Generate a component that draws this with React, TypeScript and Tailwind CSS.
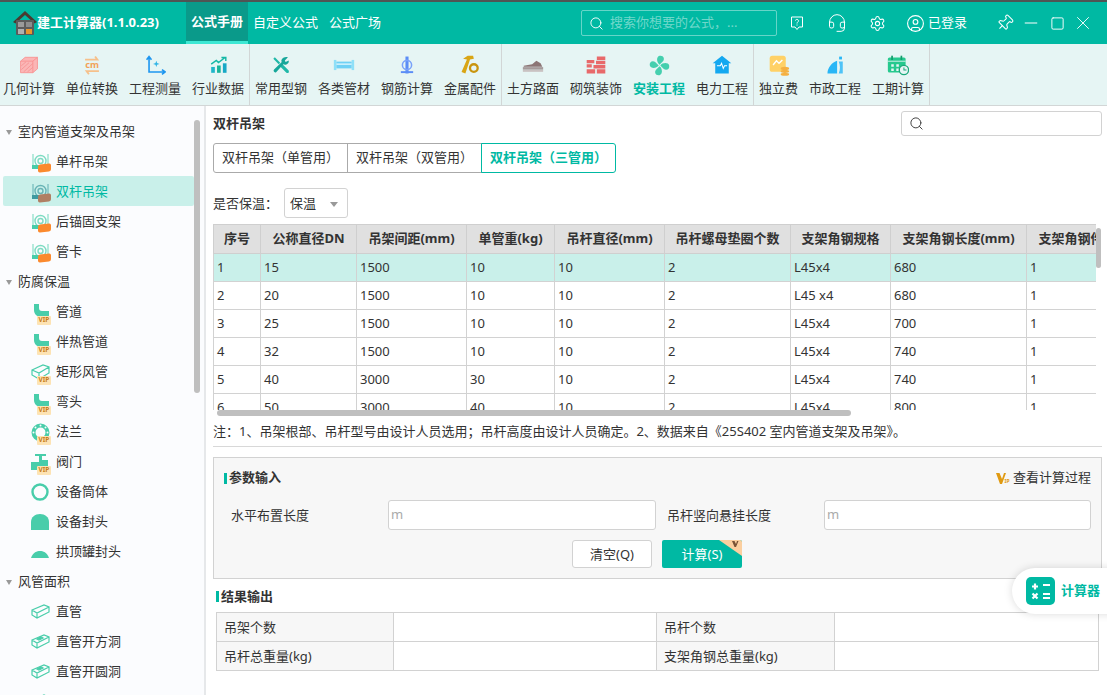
import { CircleUser, Headset, Minus, Pin, Search, Settings, Square, X } from 'lucide-react';

const FONT = '[font-family:"Noto_Sans","Noto_Sans_CJK_SC",sans-serif]';

function Logo() {
  return (
    <svg width="26" height="26" viewBox="0 0 26 26">
      <path d="M13 1 L25 12 L22.5 13.5 L13 5 L3.5 13.5 L1 12 Z" fill="#4a3a30" />
      <rect x="4" y="10" width="18" height="15" rx="1" fill="#5b5b5b" />
      <rect x="6" y="12" width="6" height="5" fill="#9a9a9a" />
      <rect x="14" y="12" width="6" height="5" fill="#8d8d8d" />
      <rect x="6" y="19" width="6" height="5" fill="#b0b0b0" />
      <rect x="14" y="19" width="6" height="5" fill="#e8962e" />
    </svg>
  );
}

function RibbonIcon({ name }: { name: string }) {
  switch (name) {
    case 'cube':
      return (
        <svg width="20" height="20" viewBox="0 0 26 26">
          <path d="M2 8 L8 3 H24 V18 L18 23 H2 Z" fill="#fbb6b6" stroke="#f98a8a" />
          <path d="M2 8 H18 V23 M18 8 L24 3" fill="none" stroke="#f98a8a" />
          <path d="M3 14 L9 9 M3 19 L13 10 M6 22 L18 11 M11 22 L18 16" stroke="#f58f8f" />
        </svg>
      );
    case 'cm':
      return (
        <svg width="20" height="20" viewBox="0 0 26 26">
          <path d="M4 6 H20 L17 2 M22 21 H6 L9 25" fill="none" stroke="#f6c08a" strokeWidth="2.4" />
          <text x="13" y="17" textAnchor="middle" fontSize="12" fontWeight="700" fill="#f2a259" fontFamily="Noto Sans">cm</text>
        </svg>
      );
    case 'axis':
      return (
        <svg width="21" height="21" viewBox="0 0 26 26">
          <path d="M5 3 V21 H24 M2 6 L5 2 L8 6 M21 18 L25 21 L21 24" fill="none" stroke="#1e96f0" strokeWidth="2" />
          <path d="M14 7 L15 10 L18 11 L15 12 L14 15 L13 12 L10 11 L13 10 Z" fill="#33b5e5" />
        </svg>
      );
    case 'chart':
      return (
        <svg width="19" height="19" viewBox="0 0 26 26">
          <rect x="3" y="15" width="5" height="8" fill="#1fb6c9" />
          <rect x="11" y="13" width="5" height="10" fill="#19b49a" />
          <rect x="19" y="10" width="5" height="13" fill="#17a9c6" />
          <path d="M3 11 L10 6 L13 9 L22 2 M17 2 H23 V7" fill="none" stroke="#14b8a6" strokeWidth="2" />
        </svg>
      );
    case 'tools':
      return (
        <svg width="20" height="20" viewBox="0 0 26 26">
          <path d="M5 3 L12 10 L10 12 L3 5 Z M11 14 L14 11 L23 20 C24 23 22 24 20 23 Z" fill="#20b8a8" />
          <path d="M22 3 L18 7 L19 9 L23 7 C24 11 19 14 16 12 L7 22 C5 24 2 21 4 19 L14 9 C12 6 17 1 22 3 Z" fill="#17a79a" />
        </svg>
      );
    case 'tube':
      return (
        <svg width="22" height="22" viewBox="0 0 26 26">
          <rect x="1" y="7" width="3" height="12" fill="#8fe0f8" />
          <rect x="22" y="7" width="3" height="12" fill="#8fe0f8" />
          <rect x="4" y="9" width="18" height="8" fill="#6fd1f5" />
          <rect x="4" y="11" width="18" height="2" fill="#c9f0fc" />
        </svg>
      );
    case 'rebar':
      return (
        <svg width="20" height="20" viewBox="0 0 26 26">
          <rect x="11" y="2" width="4" height="22" fill="#5b8df6" />
          <circle cx="13" cy="13" r="6" fill="none" stroke="#7aa2fa" strokeWidth="2" />
          <rect x="5" y="21" width="16" height="2.5" fill="#5b8df6" />
        </svg>
      );
    case 'hammer':
      return (
        <svg width="20" height="20" viewBox="0 0 26 26">
          <path d="M4 5 L10 1 H17 L18 5 L13 6 L7 24 L2 22 L9 6 Z" fill="#d9a514" />
          <circle cx="18" cy="17" r="5" fill="none" stroke="#c9940f" strokeWidth="3" />
        </svg>
      );
    case 'road':
      return (
        <svg width="22" height="22" viewBox="0 0 26 26">
          <path d="M2 14 L12 12 L17 8 L22 11 L24 15 H2 Z" fill="#8c7575" />
          <rect x="1" y="15.5" width="24" height="3" fill="#a59a9a" />
          <rect x="1" y="19" width="24" height="2" fill="#c7bebe" />
        </svg>
      );
    case 'brick':
      return (
        <svg width="22" height="22" viewBox="0 0 26 26">
          <path d="M2 7 H11 V11 H2 Z M14 3 H24 V7 H14 Z M13 8 H24 V12 H13 Z M2 12 H8 V16 H2 Z M10 13 H24 V17 H10 Z M2 18 H12 V23 H2 Z M14 18 H24 V23 H14 Z" fill="#e8696a" />
        </svg>
      );
    case 'fan':
      return (
        <svg width="21" height="21" viewBox="0 0 26 26">
          <g fill="#45cfae">
            <path d="M13 12 C9 9 9 2 13 1 C18 0 20 5 17 8 Z" />
            <path d="M14 13 C17 9 24 9 25 13 C26 18 21 20 18 17 Z" />
            <path d="M13 14 C17 17 17 24 13 25 C8 26 6 21 9 18 Z" />
            <path d="M12 13 C9 17 2 17 1 13 C0 8 5 6 8 9 Z" />
          </g>
        </svg>
      );
    case 'power':
      return (
        <svg width="22" height="22" viewBox="0 0 26 26">
          <path d="M13 2 L24 11 H21 V23 H5 V11 H2 Z" fill="#14a8f0" />
          <path d="M7 14 H11 L12.5 11 L14.5 17 L16 14 H19" fill="none" stroke="#fff" strokeWidth="1.2" />
        </svg>
      );
    case 'fee':
      return (
        <svg width="22" height="22" viewBox="0 0 26 26">
          <rect x="2" y="2" width="19" height="19" rx="3" fill="#ffd166" />
          <path d="M6 13 L10 8 L13 11 L17 7" fill="none" stroke="#fff" strokeWidth="1.6" />
          <ellipse cx="20" cy="17" rx="5" ry="2" fill="#f5b041" />
          <ellipse cx="20" cy="20.5" rx="5" ry="2" fill="#f5b041" />
          <ellipse cx="20" cy="24" rx="5" ry="1.8" fill="#f5b041" />
        </svg>
      );
    case 'city':
      return (
        <svg width="21" height="21" viewBox="0 0 26 26">
          <path d="M3 23 C3 15 9 9 15 7 V23 Z" fill="#29b6f6" />
          <path d="M17 8 H22 V23 H17 C19 18 19 13 17 8 Z" fill="#4fc3f7" />
          <rect x="17.5" y="2" width="3.5" height="3.5" fill="#29b6f6" />
        </svg>
      );
    default:
      return (
        <svg width="22" height="22" viewBox="0 0 26 26">
          <rect x="1" y="4" width="21" height="18" rx="2" fill="#26c98e" />
          <rect x="5" y="2" width="2" height="5" fill="#129c6b" />
          <rect x="16" y="2" width="2" height="5" fill="#129c6b" />
          <rect x="1" y="8" width="21" height="1" fill="#e6f5f4" />
          <path d="M5 12 H8 V15 H5 Z M11 12 H14 V15 H11 Z M5 17 H8 V20 H5 Z M11 17 H14 V20 H11 Z" fill="#e6f5f4" />
          <circle cx="20" cy="19" r="5.5" fill="#e6f5f4" stroke="#1aa87a" strokeWidth="1.5" />
          <path d="M20 16 V19 H23" fill="none" stroke="#1aa87a" strokeWidth="1.2" />
        </svg>
      );
  }
}

const ribbon = [
  [['cube', '几何计算'], ['cm', '单位转换'], ['axis', '工程测量'], ['chart', '行业数据']],
  [['tools', '常用型钢'], ['tube', '各类管材'], ['rebar', '钢筋计算'], ['hammer', '金属配件']],
  [['road', '土方路面'], ['brick', '砌筑装饰'], ['fan', '安装工程'], ['power', '电力工程']],
  [['fee', '独立费'], ['city', '市政工程'], ['cal', '工期计算']],
];

function Ribbon() {
  return (
    <div className="flex h-[62px] shrink-0 border-b border-[#d2d6d6] bg-[#e6f5f4]">
      {ribbon.map((group, i) => (
        <div
          key={i}
          className={
            i === 0
              ? 'flex w-[252px] -ml-[2.5px] border-r border-[#d2d6d6]'
              : i === 3
                ? 'flex w-[176px] border-r border-[#d2d6d6]'
                : 'flex w-[252px] border-r border-[#d2d6d6]'
          }
        >
          {group.map(([icon, label]) => (
            <div key={label} className="flex flex-col items-center px-[5.5px] pt-[8px]">
              <div className="flex h-[26px] w-[26px] items-center justify-center">
                <RibbonIcon name={icon} />
              </div>
              <span
                className={
                  label === '安装工程'
                    ? 'whitespace-nowrap text-[13px] leading-[20px] font-bold text-[#00b9a3]'
                    : 'whitespace-nowrap text-[13px] leading-[20px] text-[#333]'
                }
              >
                {label}
              </span>
            </div>
          ))}
        </div>
      ))}
    </div>
  );
}

function Header() {
  return (
    <div className="flex h-[42px] shrink-0 items-center bg-[#00b9a3] text-white">
      <div className="ml-[12px] flex w-[174px] items-center">
        <Logo />
        <span className="-ml-[1px] text-[13px] font-bold whitespace-nowrap">建工计算器(1.1.0.23)</span>
      </div>
      <div className="flex h-full w-[62px] items-center justify-center border-b-[3px] border-[#3ee8d4] bg-[#0a9a8a] text-[13px] font-bold">
        公式手册
      </div>
      <span className="ml-[5px] text-[13px]">自定义公式</span>
      <span className="ml-[11px] text-[13px]">公式广场</span>
      <div className="ml-[200px] flex h-[26px] w-[196px] items-center rounded-[2px] border border-white/40 pl-[7px]">
        <Search className="h-[15px] w-[15px]" strokeWidth={1.5} />
        <span className="ml-[6px] text-[13px] text-white/45">搜索你想要的公式，...</span>
      </div>
      <svg width="14" height="15" viewBox="0 0 14 15" className="ml-[13px]" fill="none" stroke="#fff" strokeWidth="1">
        <path d="M1.5 1 H12.5 V11 H9 L7 13.5 L5 11 H1.5 Z" />
        <path d="M5.5 4.5 C5.5 3 8.5 3 8.5 4.8 C8.5 6 7 6 7 7.5 M7 8.5 V9.5" />
      </svg>
      <Headset className="ml-[23px] h-[20px] w-[20px]" strokeWidth={1.2} />
      <Settings className="ml-[21.5px] h-[17px] w-[17px]" strokeWidth={1.5} />
      <CircleUser className="ml-[20px] h-[19px] w-[19px]" strokeWidth={1.4} />
      <span className="ml-[3.5px] text-[13px]">已登录</span>
      <Pin className="ml-[29px] h-[18px] w-[18px] rotate-45" strokeWidth={1.4} />
      <Minus className="ml-[7px] h-[20px] w-[20px]" strokeWidth={1.2} />
      <Square className="ml-[8.5px] h-[15px] w-[15px]" strokeWidth={1.5} />
      <X className="ml-[7.5px] h-[22px] w-[22px]" strokeWidth={1} />
    </div>
  );
}

function Vip() {
  return (
    <span className="absolute -right-[1px] -bottom-[3px] flex h-[9px] w-[14px] items-center justify-center rounded-[1px] bg-[#fde3b4] text-[6.5px] leading-none font-bold text-[#c67c1a]">
      VIP
    </span>
  );
}

function TreeIcon({ name, selected }: { name: string; selected?: boolean }) {
  const c = selected ? '#3e9aa0' : '#48cdaa';
  const shape = () => {
    switch (name) {
      case 'hanger':
        return (
          <g fill="none" stroke={c} strokeWidth="1.4">
            <path d="M2 1 V15 M17 1 V15" strokeOpacity="0.55" />
            <circle cx="9.5" cy="8" r="5.5" strokeOpacity="0.7" />
            <circle cx="9.5" cy="8" r="2.5" strokeOpacity="0.7" />
            <path d="M1 12 H12 V16 H1 Z" fill={c} stroke="none" />
          </g>
        );
      case 'pipe':
        return <path d="M3 1 H8 V5 C8 7 9 8 11 8 H18 V14 H10 C6 14 3 11 3 7 Z" fill={c} />;
      case 'box':
        return (
          <g fill="none" stroke={c} strokeWidth="1.2">
            <path d="M1 7 L12 2 L18 4 L18 10 L8 16 L1 12 Z M1 7 L8 10 L18 4 M8 10 V16" />
          </g>
        );
      case 'flange':
        return (
          <g>
            <circle cx="9.5" cy="9.5" r="7" fill="none" stroke={c} strokeWidth="4" />
            <g fill="#fbfcfe">
              <circle cx="9.5" cy="2.5" r="1" />
              <circle cx="2.5" cy="9.5" r="1" />
              <circle cx="16.5" cy="9.5" r="1" />
              <circle cx="4.5" cy="4.5" r="1" />
              <circle cx="14.5" cy="4.5" r="1" />
            </g>
          </g>
        );
      case 'valve':
        return <path d="M4 1 H15 V3 H11 V7 H17 V13 H12 V17 H0 V9 H8 V3 H4 Z" fill={c} />;
      case 'ring':
        return <circle cx="9" cy="9" r="7.5" fill="none" stroke={c} strokeWidth="2.4" />;
      case 'cap':
        return <path d="M0 17 V9 C0 4 4 1 9 1 C14 1 18 4 18 9 V17 Z" fill={c} />;
      case 'dome':
        return <path d="M0 15 C2 9 6 8 9 8 C12 8 16 9 18 15 Z" fill={c} />;
      case 'duct':
      case 'ducthole':
        return (
          <g fill="none" stroke={c} strokeWidth="1.2">
            <path d="M1 7 L13 2 L18 4 V9 L6 15 L1 12 Z M1 7 L6 10 L18 4 M6 10 V15" />
            {name === 'ducthole' && <path d="M6 6 L10 4 L12 5 L8 7 Z" fill={c} />}
          </g>
        );
      default:
        return null;
    }
  };
  return (
    <span className="relative mr-[4px] block h-[19px] w-[19px] shrink-0">
      <svg width="19" height="19" viewBox="0 0 19 19">
        {shape()}
      </svg>
      {name === 'hanger' && (
        <span
          className={
            selected
              ? 'absolute -right-[1px] bottom-0 h-[8px] w-[13px] -skew-y-6 rounded-[2px] bg-[#b07f63]'
              : 'absolute -right-[1px] bottom-0 h-[8px] w-[13px] -skew-y-6 rounded-[2px] bg-[#fb8a2e]'
          }
        />
      )}
      {['pipe', 'box', 'flange', 'valve'].includes(name) && <Vip />}
    </span>
  );
}

const tree: { title: string; items: [string, string][] }[] = [
  {
    title: '室内管道支架及吊架',
    items: [['hanger', '单杆吊架'], ['hanger', '双杆吊架'], ['hanger', '后锚固支架'], ['hanger', '管卡']],
  },
  {
    title: '防腐保温',
    items: [
      ['pipe', '管道'], ['pipe', '伴热管道'], ['box', '矩形风管'], ['pipe', '弯头'], ['flange', '法兰'],
      ['valve', '阀门'], ['ring', '设备筒体'], ['cap', '设备封头'], ['dome', '拱顶罐封头'],
    ],
  },
  {
    title: '风管面积',
    items: [['duct', '直管'], ['ducthole', '直管开方洞'], ['ducthole', '直管开圆洞'], ['ducthole', '弯头']],
  },
];

function Sidebar() {
  return (
    <div className="relative h-full w-[206px] shrink-0 overflow-hidden border-r-[2px] border-[#e6e8ea] bg-[#fbfcfe] pt-[10px] pl-[3px] text-[13px] text-[#333]">
      {tree.map((g) => (
        <div key={g.title}>
          <div className="flex h-[30px] items-center pt-[2px] pl-[3px]">
            <span className="mr-[6px] h-0 w-0 border-x-[3.5px] border-t-[5px] border-x-transparent border-t-[#999]" />
            {g.title}
          </div>
          {g.items.map(([icon, label]) => {
            const selected = label === '双杆吊架';
            return (
              <div
                key={label + icon}
                className={
                  selected
                    ? 'flex h-[30px] w-[191px] items-center rounded-[2px] bg-[#c9f0ea] pt-[2px] pl-[28px] text-[#00b9a3]'
                    : 'flex h-[30px] w-[191px] items-center pt-[2px] pl-[28px]'
                }
              >
                <TreeIcon name={icon} selected={selected} />
                <span className="ml-[2px]">{label}</span>
              </div>
            );
          })}
        </div>
      ))}
      <div className="absolute top-[14px] left-[194px] h-[273px] w-[6px] rounded-[3px] bg-[#bfbfbf]" />
    </div>
  );
}

const columns = [
  ['序号', 'w-[47px]'],
  ['公称直径DN', 'w-[96px]'],
  ['吊架间距(mm)', 'w-[110px]'],
  ['单管重(kg)', 'w-[88px]'],
  ['吊杆直径(mm)', 'w-[110px]'],
  ['吊杆螺母垫圈个数', 'w-[126px]'],
  ['支架角钢规格', 'w-[100px]'],
  ['支架角钢长度(mm)', 'w-[136px]'],
  ['支架角钢件数', 'w-[102px]'],
];

const rows = [
  ['1', '15', '1500', '10', '10', '2', 'L45x4', '680', '1'],
  ['2', '20', '1500', '10', '10', '2', 'L45 x4', '680', '1'],
  ['3', '25', '1500', '10', '10', '2', 'L45x4', '700', '1'],
  ['4', '32', '1500', '10', '10', '2', 'L45x4', '740', '1'],
  ['5', '40', '3000', '30', '10', '2', 'L45x4', '740', '1'],
  ['6', '50', '3000', '40', '10', '2', 'L45x4', '800', '1'],
];

function DataTable() {
  return (
    <div className="relative mt-[6px] h-[192px] w-[889px]">
      <div className="h-[186px] w-[883px] overflow-hidden">
        <table className="w-[915px] table-fixed border-collapse text-[13px] text-[#333]">
          <colgroup>
            {columns.map(([name, w]) => (
              <col key={name} className={w} />
            ))}
          </colgroup>
          <thead>
            <tr className="h-[29px] bg-[#e0e0e0]">
              {columns.map(([name]) => (
                <th key={name} className="overflow-hidden border border-[#cfcfcf] p-0 font-bold whitespace-nowrap">
                  {name}
                </th>
              ))}
            </tr>
          </thead>
          <tbody>
            {rows.map((r, i) => (
              <tr key={r[0]} className={i === 0 ? 'h-[28px] bg-[#c9f0ea]' : 'h-[28px] bg-white'}>
                {r.map((v, j) => (
                  <td key={j} className="border border-[#d2d2d2] px-[3px] py-0">
                    {v}
                  </td>
                ))}
              </tr>
            ))}
          </tbody>
        </table>
      </div>
      <div className="absolute top-[4px] left-[883px] h-[40px] w-[5px] rounded-[3px] bg-[#bfbfbf]" />
      <div className="absolute top-[186px] left-[4px] h-[6px] w-[634px] rounded-[3px] bg-[#bfbfbf]" />
    </div>
  );
}

function SectionTitle({ children }: { children: React.ReactNode }) {
  return (
    <div className="flex items-center text-[13px] font-bold text-[#333]">
      <span className="mr-[2px] h-[11px] w-[3px] bg-[#00b9a3]" />
      {children}
    </div>
  );
}

function Field({ placeholder, className }: { placeholder: string; className: string }) {
  return (
    <div className={`flex h-[30px] items-center rounded-[3px] border border-[#d2d2d2] bg-white pl-[2px] text-[13px] text-[#aaa] ${className}`}>
      {placeholder}
    </div>
  );
}

function Main() {
  return (
    <div className="relative min-w-0 flex-1 overflow-hidden bg-white pt-[5px] pl-[7px] text-[13px] text-[#333]">
      <div className="flex h-[25px] w-[889px] items-center justify-between">
        <span className="text-[13px] font-bold">双杆吊架</span>
        <div className="flex h-[25px] w-[201px] items-center rounded-[3px] border border-[#d2d2d2] pl-[7px]">
          <Search className="h-[15px] w-[15px] text-[#444]" strokeWidth={1.6} />
        </div>
      </div>
      <div className="mt-[7px] flex h-[30px] w-[403px]">
        <div className="flex w-[135px] items-center justify-center rounded-l-[3px] border border-[#aaa]">双杆吊架（单管用）</div>
        <div className="-ml-px flex w-[135px] items-center justify-center border border-[#aaa]">双杆吊架（双管用）</div>
        <div className="-ml-px flex w-[135px] items-center justify-center rounded-r-[3px] border border-[#00b9a3] font-bold text-[#00b9a3]">
          双杆吊架（三管用）
        </div>
      </div>
      <div className="mt-[15px] flex h-[30px] items-center">
        <span className="w-[71px] pt-[2px]">是否保温：</span>
        <div className="flex h-[30px] w-[64px] items-center justify-between rounded-[3px] border border-[#d2d2d2] pt-[2px] pr-[9px] pl-[5px]">
          保温
          <span className="h-0 w-0 border-x-[4px] border-t-[5px] border-x-transparent border-t-[#999]" />
        </div>
      </div>
      <DataTable />
      <div className="mt-[5px] h-[20px] leading-[20px] whitespace-nowrap">
        注：1、吊架根部、吊杆型号由设计人员选用；吊杆高度由设计人员确定。2、数据来自《25S402 室内管道支架及吊架》。
      </div>
      <div className="mt-[5px] h-px w-[889px] bg-[#d8d8d8]" />
      <div className="mt-[10px] h-[122px] w-[889px] border border-[#d2d2d2] bg-[#f7f7f7] pt-[12px] pr-[10px] pl-[10px]">
        <div className="flex h-[16px] items-center justify-between">
          <SectionTitle>参数输入</SectionTitle>
          <div className="flex items-center">
            <svg width="14" height="13" viewBox="0 0 14 13" className="mr-[3px]">
              <path d="M0 1 H3.5 L6 7 L8 1 H10 L6 12 H4 Z" fill="#e09a12" />
              <text x="8.5" y="11" fontSize="5" fontWeight="700" fill="#e09a12" fontFamily="Noto Sans">IP</text>
            </svg>
            查看计算过程
          </div>
        </div>
        <div className="mt-[14px] flex h-[30px] items-center">
          <span className="ml-[7px] w-[157px] pt-[2px]">水平布置长度</span>
          <Field placeholder="m" className="w-[268px]" />
          <span className="ml-[11px] w-[157px] pt-[2px]">吊杆竖向悬挂长度</span>
          <Field placeholder="m" className="w-[267px]" />
        </div>
        <div className="mt-[10px] ml-[348px] flex gap-[10px]">
          <div className="flex h-[28px] w-[80px] items-center justify-center rounded-[3px] border border-[#d2d2d2] bg-white pt-[2px]">清空(Q)</div>
          <div className="relative flex h-[28px] w-[80px] items-center justify-center overflow-hidden rounded-[2px] bg-[#00b9a3] pt-[2px] text-white">
            计算(S)
            <svg width="23" height="16" viewBox="0 0 23 16" className="absolute top-0 right-0">
              <path d="M0 0 H23 V16 Z" fill="#fbcf9f" />
              <path d="M13 1 H15.5 L17 4 L18 1 H19.5 L17 7 H15.5 Z" fill="#7a5336" />
            </svg>
          </div>
        </div>
      </div>
      <div className="mt-[8px] ml-[3px]">
        <SectionTitle>结果输出</SectionTitle>
      </div>
      <div className="mt-[5px] ml-[3px] grid w-[883px] grid-cols-[177px_263px_178px_1fr] border-t border-l border-[#d2d2d2]">
        {['吊架个数', '', '吊杆个数', '', '吊杆总重量(kg)', '', '支架角钢总重量(kg)', ''].map((t, i) => (
          <div
            key={i}
            className={
              i % 2 === 0
                ? 'flex h-[29px] items-center border-r border-b border-[#d2d2d2] bg-[#f7f7f7] pt-[2px] pl-[7px]'
                : 'h-[29px] border-r border-b border-[#d2d2d2] bg-white'
            }
          >
            {t}
          </div>
        ))}
      </div>
    </div>
  );
}

export default function App() {
  return (
    <div className={`relative flex h-[695px] w-[1107px] flex-col overflow-hidden bg-white ${FONT}`}>
      <div className="h-[2px] shrink-0 bg-[#4f5554]" />
      <Header />
      <Ribbon />
      <div className="flex min-h-0 flex-1">
        <Sidebar />
        <Main />
      </div>
      <div className="absolute top-[568px] -right-[20px] flex h-[46px] w-[115px] items-center rounded-l-[23px] bg-white pl-[14px] shadow-[0_0_8px_rgba(0,0,0,0.15)]">
        <svg width="29" height="28" viewBox="0 0 29 28">
          <rect width="29" height="28" rx="5" fill="#00b9a3" />
          <path d="M6 9.5 H12 M9 6.5 V12.5 M17 8 H24 M17 17 H24 M17 21 H24" stroke="#fff" strokeWidth="2.2" fill="none" />
          <path d="M6.5 16.5 L11.5 21.5 M11.5 16.5 L6.5 21.5" stroke="#fff" strokeWidth="2.2" fill="none" />
        </svg>
        <span className="ml-[6px] text-[13px] font-bold whitespace-nowrap text-[#00b9a3]">计算器</span>
      </div>
    </div>
  );
}
